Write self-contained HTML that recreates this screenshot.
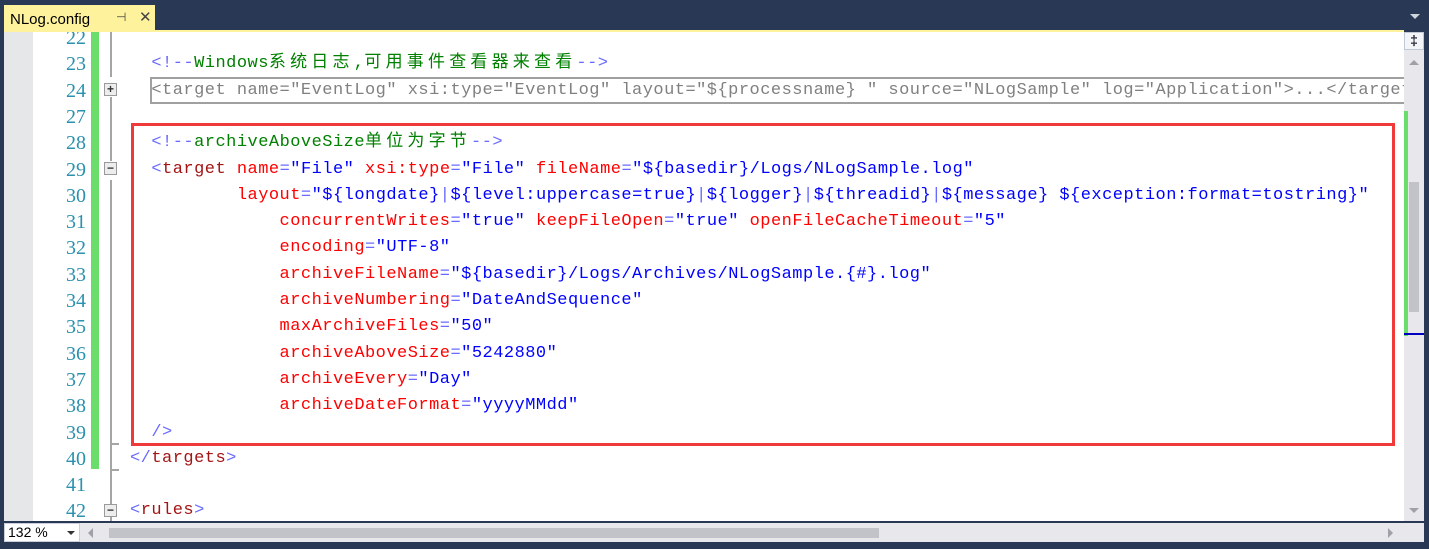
<!DOCTYPE html>
<html><head><meta charset="utf-8"><style>
*{margin:0;padding:0;box-sizing:border-box}
body{width:1429px;height:549px;background:#293955;position:relative;overflow:hidden;font-family:"Liberation Mono","Noto Sans CJK SC",monospace}
.tab{position:absolute;left:4px;top:5px;width:151px;height:27px;background:#FFF29D;font-family:"Liberation Sans",sans-serif;font-size:15px;color:#000;padding:6px 0 0 6px}
.tab .pin{position:absolute;left:112px;top:5px;font-size:12px;color:#444}
.tab .x{position:absolute;left:135px;top:3px;font-size:15px;color:#444}
.topline{position:absolute;left:4px;top:30px;width:1400px;height:2px;background:#FFF29D}
.ed{position:absolute;left:4px;top:32px;width:1400px;height:489px;background:#fff;overflow:hidden}
.lm{position:absolute;left:0;top:0;width:29px;height:489px;background:#E6E7E8}
.green{position:absolute;left:87px;top:0;width:8px;height:437px;background:#6BDD6B}
.ol{position:absolute;left:106px;width:2px;background:#A5A5A5}
.tick{position:absolute;left:106px;width:9px;height:2px;background:#A5A5A5}
.box{position:absolute;left:100px;width:13px;height:13px;border:1px solid #9A9A9A;background:#EDEDED;font:bold 12px/11px "Liberation Sans",sans-serif;text-align:center;color:#333}
.rows{position:absolute;left:0;top:-7px}
.r{position:absolute;height:26.3px;line-height:26.3px;font-size:17px;letter-spacing:0.48px;white-space:pre;left:126px}
.n{position:absolute;left:30px;width:52px;text-align:right;color:#2B91AF;font-size:20px;line-height:26.3px;font-family:"Liberation Serif",serif}
.d{color:#6A6AFF}.t{color:#A31515}.a{color:#FF0000}.v{color:#0000FF}.c{color:#008000}.g{color:#808080}
.cj{letter-spacing:4.2px}
.coll{position:absolute;left:146px;top:45px;width:1260px;height:27px;border:2px solid #A0A0A0;border-right:none}
.red{position:absolute;left:127px;top:91px;width:1264px;height:323px;border:3px solid #F03A3A}
.vs{position:absolute;left:1404px;top:32px;width:20px;height:489px;background:#E8E8EC}
.hs{position:absolute;left:4px;top:523px;width:1420px;height:19px;background:#E8E8EC}
</style></head><body>
<div class="tab">NLog.config<span class="pin">⊣</span><span class="x">✕</span></div>
<div style="position:absolute;left:1410px;top:14px;width:0;height:0;border-left:5px solid transparent;border-right:5px solid transparent;border-top:5px solid #CED4DD"></div>
<div class="topline"></div>
<div class="ed">
<div class="lm"></div>
<div class="green"></div>
<div class="ol" style="top:0;height:45px"></div>
<div class="ol" style="top:65px;height:64px"></div>
<div class="ol" style="top:148px;height:341px"></div>
<div class="tick" style="top:411px"></div>
<div class="tick" style="top:437px"></div>
<div class="box" style="top:51px">+</div>
<div class="box" style="top:130px">−</div>
<div class="box" style="top:472px">−</div>
<div class="coll"></div>
<div class="red"></div>
<div class="rows">
<div class="n" style="top:0">22</div>
<div class="n" style="top:26.3px">23</div><div class="r" style="top:26.3px">  <span class="d">&lt;!--</span><span class="c">Windows<span class="cj">系统日志</span>,<span class="cj">可用事件查看器来查看</span></span><span class="d">--&gt;</span></div>
<div class="n" style="top:52.6px">24</div><div class="r g" style="top:52.6px">  &lt;target name="EventLog" xsi:type="EventLog" layout="${processname} " source="NLogSample" log="Application"&gt;...&lt;/target&gt;</div>
<div class="n" style="top:78.9px">27</div>
<div class="n" style="top:105.2px">28</div><div class="r" style="top:105.2px">  <span class="d">&lt;!--</span><span class="c">archiveAboveSize<span class="cj">单位为字节</span></span><span class="d">--&gt;</span></div>
<div class="n" style="top:131.5px">29</div><div class="r" style="top:131.5px">  <span class="d">&lt;</span><span class="t">target</span> <span class="a">name</span><span class="d">=</span><span class="v">"File"</span> <span class="a">xsi:type</span><span class="d">=</span><span class="v">"File"</span> <span class="a">fileName</span><span class="d">=</span><span class="v">"${basedir}/Logs/NLogSample.log"</span></div>
<div class="n" style="top:157.8px">30</div><div class="r" style="top:157.8px">          <span class="a">layout</span><span class="d">=</span><span class="v">"${longdate}<span class="d">|</span>${level:uppercase=true}<span class="d">|</span>${logger}<span class="d">|</span>${threadid}<span class="d">|</span>${message} ${exception:format=tostring}"</span></div>
<div class="n" style="top:184.1px">31</div><div class="r" style="top:184.1px">              <span class="a">concurrentWrites</span><span class="d">=</span><span class="v">"true"</span> <span class="a">keepFileOpen</span><span class="d">=</span><span class="v">"true"</span> <span class="a">openFileCacheTimeout</span><span class="d">=</span><span class="v">"5"</span></div>
<div class="n" style="top:210.4px">32</div><div class="r" style="top:210.4px">              <span class="a">encoding</span><span class="d">=</span><span class="v">"UTF-8"</span></div>
<div class="n" style="top:236.7px">33</div><div class="r" style="top:236.7px">              <span class="a">archiveFileName</span><span class="d">=</span><span class="v">"${basedir}/Logs/Archives/NLogSample.{#}.log"</span></div>
<div class="n" style="top:263px">34</div><div class="r" style="top:263px">              <span class="a">archiveNumbering</span><span class="d">=</span><span class="v">"DateAndSequence"</span></div>
<div class="n" style="top:289.3px">35</div><div class="r" style="top:289.3px">              <span class="a">maxArchiveFiles</span><span class="d">=</span><span class="v">"50"</span></div>
<div class="n" style="top:315.6px">36</div><div class="r" style="top:315.6px">              <span class="a">archiveAboveSize</span><span class="d">=</span><span class="v">"5242880"</span></div>
<div class="n" style="top:341.9px">37</div><div class="r" style="top:341.9px">              <span class="a">archiveEvery</span><span class="d">=</span><span class="v">"Day"</span></div>
<div class="n" style="top:368.2px">38</div><div class="r" style="top:368.2px">              <span class="a">archiveDateFormat</span><span class="d">=</span><span class="v">"yyyyMMdd"</span></div>
<div class="n" style="top:394.5px">39</div><div class="r" style="top:394.5px">  <span class="d">/&gt;</span></div>
<div class="n" style="top:420.8px">40</div><div class="r" style="top:420.8px"><span class="d">&lt;/</span><span class="t">targets</span><span class="d">&gt;</span></div>
<div class="n" style="top:447.1px">41</div>
<div class="n" style="top:473.4px">42</div><div class="r" style="top:473.4px"><span class="d">&lt;</span><span class="t">rules</span><span class="d">&gt;</span></div>
</div>
</div>
<div class="vs">
<div style="position:absolute;left:0;top:0;width:20px;height:18px;border:1px solid #C0C8D8;background:#F2F4F8;font:bold 14px/14px 'Liberation Sans',sans-serif;text-align:center;color:#223">‡</div>
<div style="position:absolute;left:5px;top:28px;border-left:5px solid transparent;border-right:5px solid transparent;border-bottom:5px solid #A0A0A8"></div>
<div style="position:absolute;left:0;top:79px;width:4px;height:225px;background:#6BDD6B"></div>
<div style="position:absolute;left:0;top:281px;width:4px;height:11px;background:#6BDD6B"></div>
<div style="position:absolute;left:5px;top:150px;width:10px;height:130px;background:#C2C3C9"></div>
<div style="position:absolute;left:0;top:301px;width:20px;height:2px;background:#0000C0"></div>
<div style="position:absolute;left:5px;top:476px;border-left:5px solid transparent;border-right:5px solid transparent;border-top:5px solid #A0A0A8"></div>
</div>
<div class="hs">
<div style="position:absolute;left:0;top:0;width:76px;height:19px;background:#fff;border:1px solid #CCCEDB;font:14px/17px 'Liberation Sans',sans-serif;padding-left:3px">132 %<span style="position:absolute;right:4px;top:7px;border-left:4px solid transparent;border-right:4px solid transparent;border-top:4px solid #333"></span></div>
<div style="position:absolute;left:84px;top:5px;border-top:5px solid transparent;border-bottom:5px solid transparent;border-right:5px solid #A0A0A8"></div>
<div style="position:absolute;left:105px;top:5px;width:770px;height:10px;background:#C2C3C9"></div>
<div style="position:absolute;left:1384px;top:5px;border-top:5px solid transparent;border-bottom:5px solid transparent;border-left:5px solid #A0A0A8"></div>
</div>
</body></html>
